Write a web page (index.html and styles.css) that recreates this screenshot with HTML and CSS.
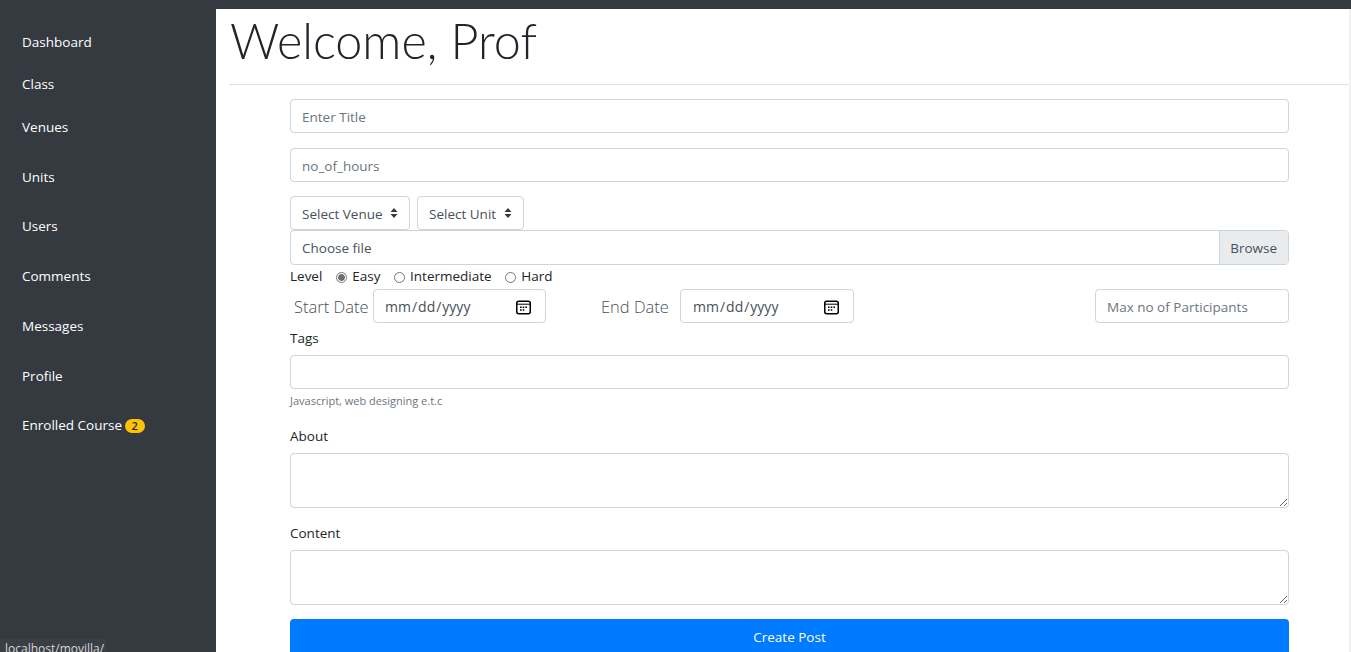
FILE: index.html
```html
<!DOCTYPE html>
<html lang="en">
<head>
    <meta charset="UTF-8">
    <meta name="viewport" content="width=device-width, initial-scale=1.0">
    <title>Welcome, Prof</title>
    <link rel="stylesheet" href="styles.css">
</head>
<body>
    <div class="topbar"></div>
    <div class="wrapper">
        <!-- Sidebar -->
        <nav class="sidebar">
            <ul>
                <li><a href="#">Dashboard</a></li>
                <li><a href="#">Class</a></li>
                <li class="spaced"><a href="#">Venues</a></li>
                <li class="spaced"><a href="#">Units</a></li>
                <li class="spaced"><a href="#">Users</a></li>
                <li class="spaced"><a href="#">Comments</a></li>
                <li class="spaced"><a href="#">Messages</a></li>
                <li class="spaced"><a href="#">Profile</a></li>
                <li class="spaced"><a href="#">Enrolled Course</a> <span class="badge">2</span></li>
            </ul>
        </nav>

        <!-- Main -->
        <main class="content">
            <h1 class="page-title">Welcome, Prof</h1>
            <hr class="title-rule">
            <form class="post-form">
                <input class="field row-gap" type="text" placeholder="Enter Title">
                <input class="field row-gap" type="text" placeholder="no_of_hours">
                <div class="select-row">
                    <select class="select-box select-venue"><option>Select Venue</option></select>
                    <select class="select-box select-unit"><option>Select Unit</option></select>
                </div>
                <div class="file-box">
                    <span class="file-label">Choose file</span>
                    <span class="file-btn">Browse</span>
                </div>
                <div class="level-row">
                    <span class="level-label">Level</span>
                    <label class="radio-item"><input type="radio" name="level" checked> Easy</label>
                    <label class="radio-item"><input type="radio" name="level"> Intermediate</label>
                    <label class="radio-item"><input type="radio" name="level"> Hard</label>
                </div>
                <div class="date-row">
                    <span class="date-label start-label">Start Date</span>
                    <input class="field date-field date-start" type="date">
                    <span class="date-label end-label">End Date</span>
                    <input class="field date-field date-end" type="date">
                    <input class="field max-field" type="text" placeholder="Max no of Participants">
                </div>
                <label class="block-label tags-label">Tags</label>
                <input class="field" type="text">
                <small class="hint">Javascript, web designing e.t.c</small>
                <label class="block-label">About</label>
                <textarea class="field text-area"></textarea>
                <label class="block-label">Content</label>
                <textarea class="field text-area"></textarea>
                <button class="submit-btn" type="button">Create Post</button>
            </form>
        </main>
    </div>
    <div class="status-tip">localhost/movilla/</div>
</body>
</html>
```

FILE: styles.css
```css
* { box-sizing: border-box; }
html, body { height: 100%; }
body { margin: 0; overflow: hidden; font-family: "Open Sans", "Noto Sans", Arial, sans-serif; font-size: 13.5px; line-height: 21.6px; color: #212529; background: #fff; }

.topbar { height: 9px; background: #343a40; }
.wrapper { display: grid; grid-template-columns: 216px 1fr; height: 643px; }

/* Sidebar */
.sidebar { background: #343a40; padding: 12px 0 0 22px; }
.sidebar ul { list-style: none; margin: 0; padding: 0; }
.sidebar li { height: 42.5px; padding-top: 10.8px; color: #fff; }
.sidebar li.spaced { margin-bottom: 7.25px; }
.sidebar a { color: #fff; text-decoration: none; }
.badge { display: inline-block; min-width: 20px; height: 14px; margin-left: -1px; padding: 0 6px; border-radius: 10px; background: #ffc107; color: #212529; font-size: 11px; font-weight: 600; line-height: 14px; text-align: center; }

/* Main */
.content { padding-left: 13px; border-right: 2px solid #f1f1f1; min-width: 0; }
.page-title { margin: 0; height: 75px; padding-left: 1px; font-family: Lato, "Open Sans", sans-serif; font-size: 48.5px; font-weight: 300; line-height: 63px; color: #212529; }
.title-rule { margin: 0; border: 0; border-top: 1px solid #dfe1e3; }
.post-form { width: 999px; margin: 14px 0 0 61px; }

.field { display: block; width: 100%; height: 34px; padding: 7px 11px 5px; border: 1px solid #ced4da; border-radius: 4px; font: inherit; color: #495057; background: #fff; }
.field::placeholder { color: #6c757d; opacity: 1; }
.row-gap { margin-bottom: 15px; }

.select-row { display: flex; gap: 7px; margin-top: -1px; }
.select-box { height: 34px; padding: 4px 24px 0 11px; border: 1px solid #ced4da; border-radius: 4px; font: inherit; color: #495057; appearance: none; background: #fff url("data:image/svg+xml,%3csvg xmlns='http://www.w3.org/2000/svg' width='8' height='10' viewBox='0 0 8 10'%3e%3cpath fill='%23343a40' d='M4 0L.5 4h7zM4 10L.5 6h7z'/%3e%3c/svg%3e") no-repeat right 11px center; }
.select-venue { width: 120px; }
.select-unit { width: 107px; }

.file-box { display: flex; justify-content: space-between; height: 35px; border: 1px solid #ced4da; border-radius: 4px; overflow: hidden; color: #495057; }
.file-label { padding: 7px 11px 0; }
.file-btn { padding: 7px 11px 0 10px; border-left: 1px solid #ced4da; background: #e9ecef; }

.level-row { display: flex; align-items: center; height: 24px; color: #212529; }
.level-label { margin-right: 14px; }
.radio-item { display: flex; align-items: center; margin-right: 13.5px; gap: 5px; }
.radio-item input { appearance: none; width: 11px; height: 11px; margin: 0; border: 1px solid #767676; border-radius: 50%; background: #fff; }
.radio-item input:checked { background: radial-gradient(circle, #6f6f6f 3px, #fff 3.8px); }

.date-row { display: flex; align-items: center; }
.date-label { padding-top: 1px; font-size: 16.5px; font-weight: 300; color: #495057; }
.start-label { width: 83px; padding-left: 4px; }
.end-label { width: 79px; margin-left: 55px; }
.date-field { font-size: 14px; }
.date-field::-webkit-calendar-picker-indicator { width: 15px; height: 15px; padding: 0; margin: 0 3px 0 0; background: url("data:image/svg+xml,%3csvg xmlns='http://www.w3.org/2000/svg' width='15' height='15' viewBox='0 0 15 15'%3e%3crect x='.75' y='1.25' width='13.5' height='12.5' rx='2' fill='none' stroke='%23000' stroke-width='1.5'/%3e%3cpath d='M1 4.2h13' stroke='%23000'/%3e%3cpath fill='%23000' d='M4 6.5h1.6V8H4zM6.7 6.5h1.6V8H6.7zM9.4 6.5H11V8H9.4zM4 9.2h1.6v1.5H4zM6.7 9.2h1.6v1.5H6.7z'/%3e%3c/svg%3e") no-repeat center; }
.date-start { width: 173px; padding-left: 10px; }
.date-end { width: 174px; }
.max-field { width: 194px; margin-left: auto; }

.block-label { display: block; height: 21px; margin-bottom: 7px; padding-top: 1px; }
.tags-label { margin-top: 4px; }
.hint { display: block; padding-top: 1px; height: 36px; font-size: 11px; color: #6c757d; }
.text-area { height: 55px; margin-bottom: 14px; resize: vertical; }
.submit-btn { display: block; width: 100%; height: 36px; padding-top: 2px; border: 0; border-radius: 4px; background: #007bff; color: #fff; font: inherit; }

/* Browser status tooltip */
.status-tip { position: absolute; left: 0; bottom: 0; width: 106px; height: 13px; padding: 0 5px; border-top-right-radius: 3px; background: #3a3f45; color: #d8d8d8; font-size: 12px; line-height: 19px; overflow: hidden; }
```
